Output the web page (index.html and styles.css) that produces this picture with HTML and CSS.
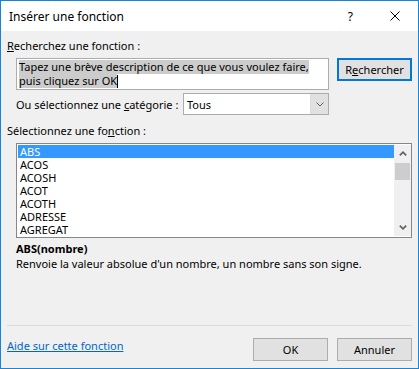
FILE: index.html
```html
<!DOCTYPE html>
<html lang="fr">
<head>
  <meta charset="UTF-8" />
  <title>Insérer une fonction</title>
  <link rel="stylesheet" href="styles.css">
</head>
<body>

<div class="dialog">
  <div class="titlebar">
    <span class="title">Insérer une fonction</span>
    <span class="help">?</span>
    <svg class="close" width="10" height="10" viewBox="0 0 10 10">
      <path d="M0.5 0.5 L9.5 9.5 M9.5 0.5 L0.5 9.5" stroke="#000" stroke-width="1" fill="none"/>
    </svg>
  </div>

  <div class="content">
    <div class="label"><u>R</u>echerchez une fonction :</div>

    <div class="search-row">
      <div class="search-box">
        <span class="sel">Tapez une brève description de ce que vous voulez faire,</span><br>
        <span class="sel">puis cliquez sur OK</span><span class="caret"></span>
      </div>
      <button type="button" class="btn btn-default">R<u>e</u>chercher</button>
    </div>

    <div class="cat-row">
      <span class="cat-label">Ou sélectionnez une <u>c</u>atégorie :</span>
      <div class="select">
        <span class="select-value">Tous</span>
        <span class="select-arrow">
          <svg width="8" height="5" viewBox="0 0 8 5"><polyline points="0.5,0.5 4,4 7.5,0.5" stroke="#606060" stroke-width="1" fill="none"/></svg>
        </span>
      </div>
    </div>

    <div class="label label-list">Sélectionnez une fo<u>n</u>ction :</div>

    <div class="listbox">
      <div class="items">
        <div class="item selected">ABS</div>
        <div class="item">ACOS</div>
        <div class="item">ACOSH</div>
        <div class="item">ACOT</div>
        <div class="item">ACOTH</div>
        <div class="item">ADRESSE</div>
        <div class="item">AGREGAT</div>
      </div>
      <div class="scrollbar">
        <div class="arrow">
          <svg width="8" height="5" viewBox="0 0 8 5"><polyline points="0.8,4.3 4,1.2 7.2,4.3" stroke="#606060" stroke-width="1.7" fill="none"/></svg>
        </div>
        <div class="thumb"></div>
        <div class="track"></div>
        <div class="arrow">
          <svg width="8" height="5" viewBox="0 0 8 5"><polyline points="0.8,0.7 4,3.8 7.2,0.7" stroke="#606060" stroke-width="1.7" fill="none"/></svg>
        </div>
      </div>
    </div>

    <div class="syntax">ABS(nombre)</div>
    <div class="desc">Renvoie la valeur absolue d'un nombre, un nombre sans son signe.</div>

    <hr class="sep">

    <div class="footer">
      <a href="#" class="help-link">Aide sur cette fonction</a>
      <div class="buttons">
        <button type="button" class="btn">OK</button>
        <button type="button" class="btn">Annuler</button>
      </div>
    </div>
  </div>
</div>

</body>
</html>
```

FILE: styles.css
```css
body { margin: 0; font-family: "Noto Sans", sans-serif; font-size: 11px; line-height: 15px; color: #000; }

.dialog {
  width: 419px;
  height: 369px;
  box-sizing: border-box;
  border: 1px solid #1883d7;
  background: #f0f0f0;
}

.titlebar {
  height: 30px;
  background: #fff;
  display: flex;
  align-items: center;
  padding-left: 8px;
  font-size: 12px;
}
.title { flex: 1; }
.help { margin-right: 37px; font-size: 12px; }
.close { margin-right: 18px; }

.content { padding: 0 6px; }

.label { margin-top: 7px; }
.label-list { margin-top: 8px; }

.search-row {
  display: flex;
  align-items: flex-start;
  gap: 8px;
  margin: 5px 0 0 9px;
}
.search-box {
  width: 313px;
  height: 32px;
  box-sizing: border-box;
  border: 1px solid #acacac;
  background: #fff;
  padding: 1px 0 0 2px;
  line-height: 14px;
}
.sel {
  display: inline-block;
  background: #cccccc;
  line-height: 14px;
}
.caret {
  display: inline-block;
  width: 1px;
  height: 13px;
  background: #000;
  vertical-align: top;
  margin-top: 1px;
}

.btn {
  width: 75px;
  height: 23px;
  box-sizing: border-box;
  border: 1px solid #adadad;
  background: #e1e1e1;
  font-family: inherit;
  font-size: 11px;
  color: #000;
  padding: 0;
}
.btn-default { border: 2px solid #0078d7; }

.cat-row {
  display: flex;
  align-items: center;
  gap: 3px;
  margin: 3px 0 0 9px;
}
.cat-label { width: 164px; }
.select {
  width: 146px;
  height: 22px;
  box-sizing: border-box;
  border: 1px solid #acacac;
  background: #fff;
  display: flex;
  align-items: center;
}
.select-value { flex: 1; padding-left: 3px; }
.select-arrow {
  width: 17px;
  height: 20px;
  background: #e1e1e1;
  border-left: 1px solid #dadada;
  display: flex;
  align-items: center;
  justify-content: center;
}

.listbox {
  width: 396px;
  height: 95px;
  box-sizing: border-box;
  border: 1px solid #828790;
  background: #fff;
  margin: 5px 0 0 9px;
  padding: 1px 0 1px 1px;
  display: flex;
}
.items { flex: 1; }
.item { height: 13px; line-height: 13px; padding-left: 2px; }
.item.selected { background: #3399ff; color: #fff; }

.scrollbar {
  width: 17px;
  background: #f0f0f0;
  display: flex;
  flex-direction: column;
}
.arrow {
  height: 17px;
  display: flex;
  align-items: center;
  justify-content: center;
}
.thumb { height: 17px; margin: 1px 1px 0 1px; background: #cdcdcd; }
.track { flex: 1; }

.syntax { font-weight: bold; margin: 3px 0 0 9px; }
.desc { margin-left: 9px; }

.sep {
  border: none;
  border-top: 1px solid #dcdcdc;
  margin: 54px 0 0 0;
}

.footer {
  display: flex;
  align-items: flex-start;
  justify-content: space-between;
  margin-top: 12px;
}
.help-link { color: #0066cc; }
.buttons { display: flex; gap: 9px; }
```
